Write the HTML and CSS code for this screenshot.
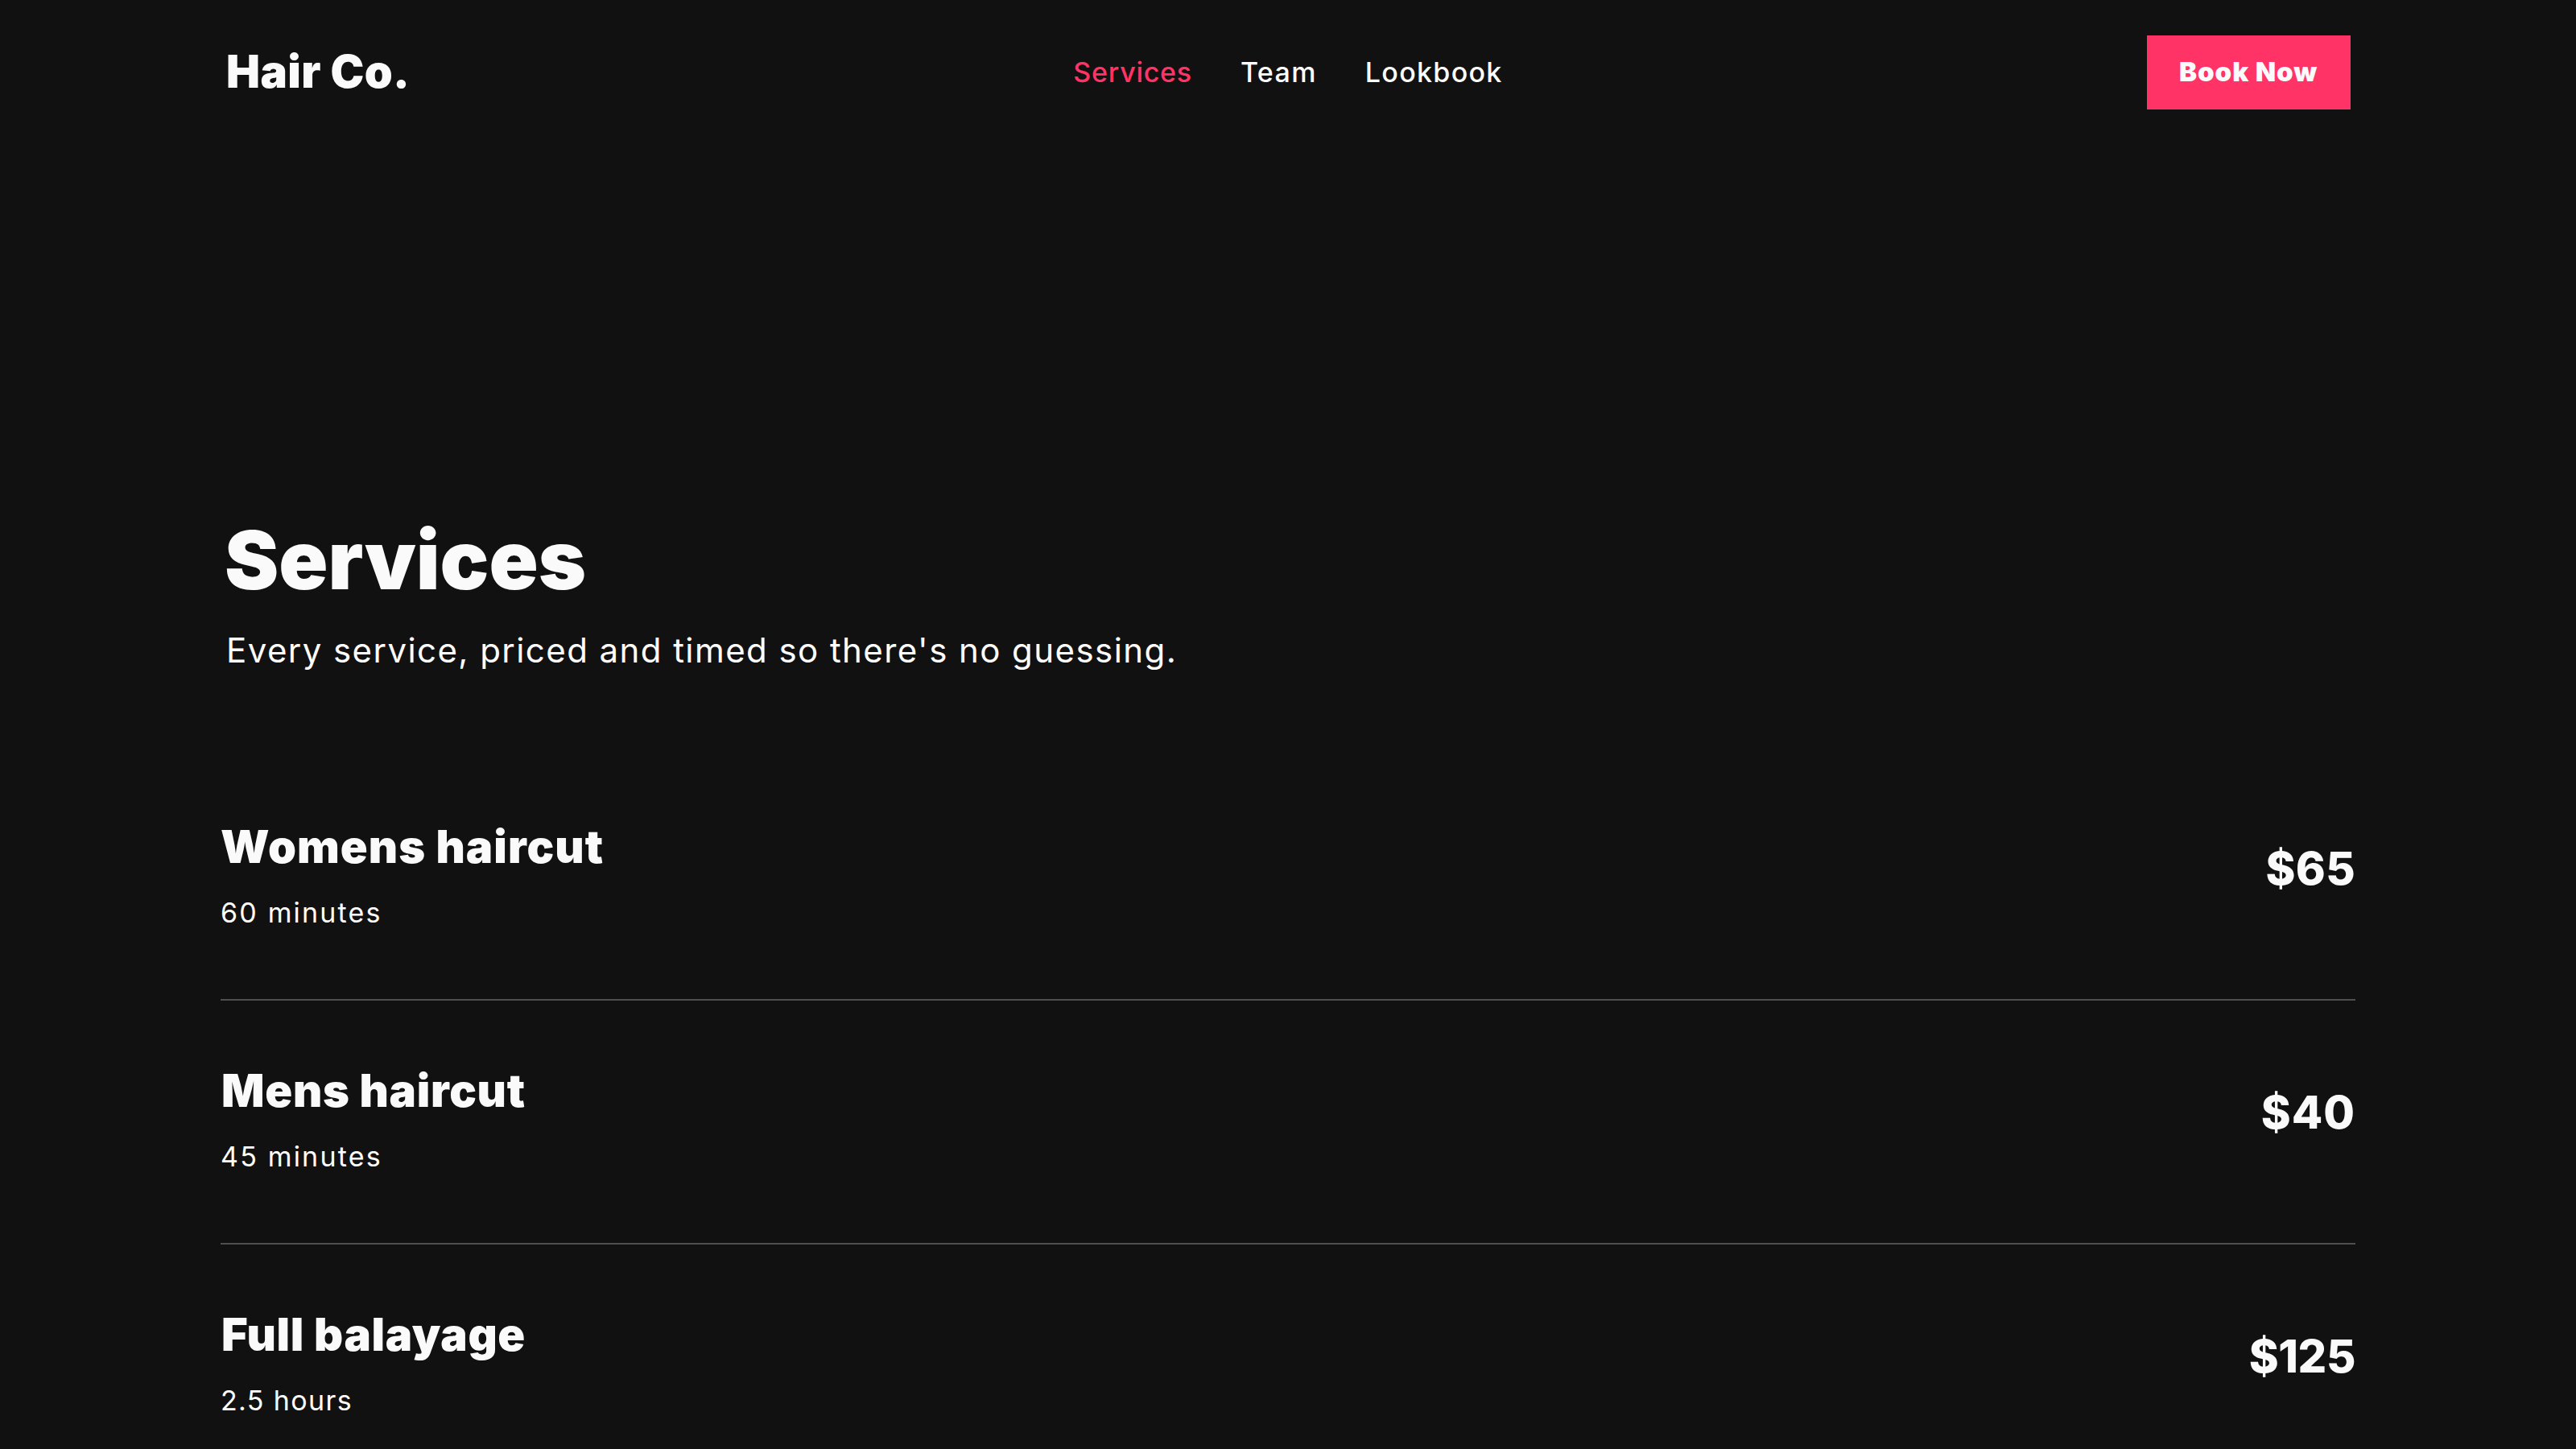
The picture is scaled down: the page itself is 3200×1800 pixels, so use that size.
FILE: index.html
```html
<!DOCTYPE html>
<html lang="en">
<head>
  <meta charset="UTF-8" />
  <title>Services | Hair Co.</title>
  <link rel="stylesheet" href="styles.css">
</head>
<body>

  <header class="header">
    <a href="#" class="logo">Hair Co.</a>
    <nav class="nav">
      <a href="#" class="nav-link nav-services active">Services</a>
      <a href="#" class="nav-link nav-team">Team</a>
      <a href="#" class="nav-link nav-lookbook">Lookbook</a>
    </nav>
    <a href="#" class="book-btn">Book Now</a>
  </header>

  <main>
    <!-- Page title -->
    <section class="hero">
      <h1>Services</h1>
      <p>Every service, priced and timed so there's no guessing.</p>
    </section>

    <!-- Price list -->
    <section class="services">
      <div class="service womens">
        <div>
          <h2>Womens haircut</h2>
          <p>60 minutes</p>
        </div>
        <span class="price">$65</span>
      </div>
      <div class="service mens">
        <div>
          <h2>Mens haircut</h2>
          <p>45 minutes</p>
        </div>
        <span class="price">$40</span>
      </div>
      <div class="service balayage">
        <div>
          <h2>Full balayage</h2>
          <p>2.5 hours</p>
        </div>
        <span class="price">$125</span>
      </div>
    </section>
  </main>

</body>
</html>
```
FILE: styles.css
```css
* {
  box-sizing: border-box;
}
body {
  margin: 0;
  height: 100vh;
  overflow: hidden;
  background: #111;
  color: #fafafa;
  font-family: Inter, "Liberation Sans", sans-serif;
}
a {
  color: inherit;
  text-decoration: none;
}
h1, h2, p {
  margin: 0;
}

/* header */
.header {
  display: grid;
  grid-template-columns: 1fr auto 1fr;
  align-items: center;
  height: 180px;
  padding: 0 280px;
}
.logo {
  padding: 0 0 3px 1px;
  font-size: 56px;
  font-weight: 900;
  letter-spacing: 0.4px;
}
.nav {
  display: flex;
  gap: 60px;
  padding-bottom: 2px;
}
.nav-link {
  font-size: 34px;
  font-weight: 500;
  color: #fff;
}
.nav-services {
  letter-spacing: 0.74px;
}
.nav-team {
  letter-spacing: 1.4px;
}
.nav-lookbook {
  letter-spacing: 1.3px;
}
.nav-link.active {
  color: #ff3366;
}
.book-btn {
  justify-self: end;
  width: 253px;
  height: 92px;
  padding-left: 40px;
  background: #ff3366;
  font-size: 33px;
  font-weight: 900;
  line-height: 90px;
  letter-spacing: 0.95px;
  white-space: nowrap;
}

/* page title */
.hero {
  padding: 455px 280px 0;
}
.hero h1 {
  margin-left: -1px;
  font-size: 101px;
  font-weight: 900;
  line-height: 120px;
  letter-spacing: 0;
}
.hero p {
  margin: 23px 0 1px 1px;
  font-size: 42px;
  line-height: 60px;
  letter-spacing: 1.43px;
  color: #fff;
}

/* price list */
.services {
  padding: 101px 274px 0;
}
.service {
  display: flex;
  justify-content: space-between;
  align-items: flex-start;
  height: 303px;
  padding-top: 78px;
  border-bottom: 2px solid #4f4f4f;
}
.service h2 {
  margin-left: 1px;
  font-size: 56px;
  font-weight: 900;
  line-height: 68px;
  letter-spacing: 0.7px;
}
.service p {
  margin-top: 24px;
  font-size: 34px;
  line-height: 48px;
  letter-spacing: 2.18px;
  color: #fff;
}
.price {
  margin-top: 27px;
  font-size: 56px;
  font-weight: 800;
  line-height: 68px;
  letter-spacing: 0.3px;
}
.womens h2 {
  margin-left: 0;
  letter-spacing: 1.05px;
}
.mens .price {
  letter-spacing: 1px;
}
.balayage p {
  letter-spacing: 1.37px;
}
.balayage .price {
  letter-spacing: -0.4px;
}
```
